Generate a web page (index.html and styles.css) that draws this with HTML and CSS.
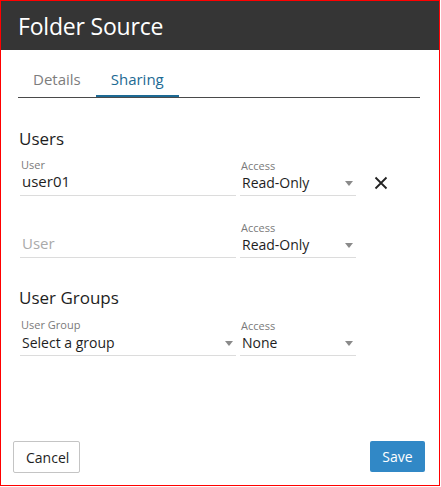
FILE: index.html
```html
<!DOCTYPE html>
<html lang="en">

<head>
  <meta charset="UTF-8">
  <meta name="viewport" content="width=device-width, initial-scale=1.0">
  <title>Folder Source</title>
  <link rel="stylesheet" href="styles.css">
</head>

<body>
  <div class="dialog">
    <!-- Header -->
    <div class="dialog-header">
      <h1 class="dialog-title">Folder Source</h1>
    </div>

    <div class="dialog-body">
      <!-- Tabs -->
      <div class="tabs">
        <span class="tab">Details</span>
        <span class="tab active">Sharing</span>
      </div>

      <!-- Users -->
      <h3 class="section-title users-title">Users</h3>

      <div class="share-row">
        <div class="field">
          <label class="field-label">User</label>
          <div class="field-input">user01</div>
        </div>
        <div class="field field-access">
          <label class="field-label">Access</label>
          <div class="field-input select">Read-Only<span class="caret"></span></div>
        </div>
        <button class="btn-remove" title="Remove">
          <svg width="14" height="14" viewBox="0 0 14 14">
            <path d="M1.5 1.5 L12.5 12.5 M12.5 1.5 L1.5 12.5" stroke="#222" stroke-width="1.8" fill="none" />
          </svg>
        </button>
      </div>

      <div class="share-row">
        <div class="field">
          <label class="field-label"></label>
          <div class="field-input placeholder">User</div>
        </div>
        <div class="field field-access">
          <label class="field-label">Access</label>
          <div class="field-input select">Read-Only<span class="caret"></span></div>
        </div>
      </div>

      <!-- User Groups -->
      <h3 class="section-title groups-title">User Groups</h3>

      <div class="share-row">
        <div class="field">
          <label class="field-label">User Group</label>
          <div class="field-input select">Select a group<span class="caret"></span></div>
        </div>
        <div class="field field-access">
          <label class="field-label">Access</label>
          <div class="field-input select">None<span class="caret"></span></div>
        </div>
      </div>
    </div>

    <!-- Footer -->
    <div class="dialog-footer">
      <button class="btn btn-cancel">Cancel</button>
      <button class="btn btn-save">Save</button>
    </div>
  </div>
</body>

</html>
```

FILE: styles.css
```css
:root {
  --header: #353535;
  --accent: #1d6a94;
  --save: #3188c6;
  --line: #dcdcdc;
  --label: #7a7a7a;
  --text: #1e1e1e;
}

* {
  box-sizing: border-box;
}

body {
  margin: 0;
  font-family: 'Open Sans', sans-serif;
  color: var(--text);
  background: #fff;
}

.dialog {
  width: 440px;
  height: 486px;
  border: 1px solid #ff0000;
  display: flex;
  flex-direction: column;
}

.dialog-header {
  height: 49px;
  background: var(--header);
  padding-left: 17px;
  display: flex;
  align-items: center;
}

.dialog-title {
  margin: 0;
  color: #fff;
  font-size: 23px;
  font-weight: 400;
  line-height: 30px;
  letter-spacing: -0.2px;
}

.dialog-body {
  flex: 1;
  padding: 0 19px 0 17px;
}

.tabs {
  display: flex;
  margin-top: 11px;
  border-bottom: 1px solid #4a4a4a;
}

.tab {
  padding: 8px 15px 6px;
  font-size: 15px;
  line-height: 20px;
  color: #7d7d7d;
  border-bottom: 2px solid transparent;
}

.tab.active {
  color: var(--accent);
  border-bottom-color: var(--accent);
}

.section-title {
  margin: 0 0 8px 1px;
  font-size: 17px;
  font-weight: 400;
  line-height: 22px;
}

.users-title {
  margin-top: 30px;
}

.groups-title {
  margin-top: 29px;
  margin-bottom: 9px;
}

.share-row {
  display: flex;
  align-items: flex-start;
  padding-left: 2px;
  margin-bottom: 24px;
}

.field {
  width: 216px;
  margin-right: 4px;
}

.field-access {
  width: 116px;
  margin-right: 0;
}

.field-label {
  display: block;
  height: 13px;
  padding-left: 1px;
  font-size: 11px;
  line-height: 13px;
  color: var(--label);
}

.field-access .field-label {
  padding-top: 1px;
}

.field-input {
  position: relative;
  padding: 0 2px 4px;
  font-size: 15px;
  line-height: 20px;
  border-bottom: 1px solid var(--line);
}

.field-input.select {
  font-size: 14px;
  padding-top: 2px;
  padding-bottom: 2px;
}

.placeholder {
  color: #aaa;
}

.caret {
  position: absolute;
  right: 3px;
  top: 10px;
  border-left: 4.5px solid transparent;
  border-right: 4.5px solid transparent;
  border-top: 5px solid #8a8a8a;
}

.btn-remove {
  margin: 18px 0 0 18px;
  padding: 0;
  border: none;
  background: none;
  cursor: pointer;
  line-height: 0;
}

.dialog-footer {
  display: flex;
  justify-content: space-between;
  padding: 0 14px 12px 12px;
}

.btn {
  height: 32px;
  padding: 0 12px;
  font-family: 'Open Sans', sans-serif;
  font-size: 14px;
  border-radius: 2px;
  cursor: pointer;
}

.btn-cancel {
  width: 67px;
  background: #fff;
  color: var(--text);
  border: 1px solid #c4c4c4;
}

.btn-save {
  width: 55px;
  height: 31px;
  background: var(--save);
  color: #fff;
  border: none;
}
```
